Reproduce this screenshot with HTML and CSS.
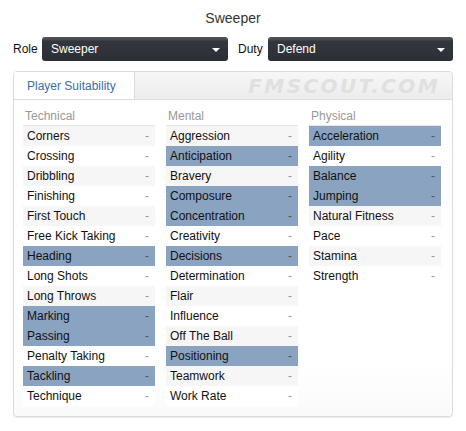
FILE: index.html
```html
<!DOCTYPE html>
<html>
<head>
<meta charset="utf-8">
<link rel="stylesheet" href="styles.css">
</head>
<body>
<div class="page">
  <div class="title">Sweeper</div>
  <div class="controls">
    <div class="field">
      <span class="label">Role</span>
      <div class="select role"><span>Sweeper</span><i class="arrow"></i></div>
    </div>
    <div class="field">
      <span class="label">Duty</span>
      <div class="select duty"><span>Defend</span><i class="arrow"></i></div>
    </div>
  </div>
  <div class="panel">
    <div class="tabs">
      <div class="tab">Player Suitability</div>
      <div class="watermark">FMSCOUT.COM</div>
    </div>
    <div class="cols">
      <div class="col">
        <div class="head">Technical</div>
        <div class="row"><span>Corners</span><b>-</b></div>
        <div class="row"><span>Crossing</span><b>-</b></div>
        <div class="row"><span>Dribbling</span><b>-</b></div>
        <div class="row"><span>Finishing</span><b>-</b></div>
        <div class="row"><span>First Touch</span><b>-</b></div>
        <div class="row"><span>Free Kick Taking</span><b>-</b></div>
        <div class="row key"><span>Heading</span><b>-</b></div>
        <div class="row"><span>Long Shots</span><b>-</b></div>
        <div class="row"><span>Long Throws</span><b>-</b></div>
        <div class="row key"><span>Marking</span><b>-</b></div>
        <div class="row key"><span>Passing</span><b>-</b></div>
        <div class="row"><span>Penalty Taking</span><b>-</b></div>
        <div class="row key"><span>Tackling</span><b>-</b></div>
        <div class="row"><span>Technique</span><b>-</b></div>
      </div>
      <div class="col">
        <div class="head">Mental</div>
        <div class="row"><span>Aggression</span><b>-</b></div>
        <div class="row key"><span>Anticipation</span><b>-</b></div>
        <div class="row"><span>Bravery</span><b>-</b></div>
        <div class="row key"><span>Composure</span><b>-</b></div>
        <div class="row key"><span>Concentration</span><b>-</b></div>
        <div class="row"><span>Creativity</span><b>-</b></div>
        <div class="row key"><span>Decisions</span><b>-</b></div>
        <div class="row"><span>Determination</span><b>-</b></div>
        <div class="row"><span>Flair</span><b>-</b></div>
        <div class="row"><span>Influence</span><b>-</b></div>
        <div class="row"><span>Off The Ball</span><b>-</b></div>
        <div class="row key"><span>Positioning</span><b>-</b></div>
        <div class="row"><span>Teamwork</span><b>-</b></div>
        <div class="row"><span>Work Rate</span><b>-</b></div>
      </div>
      <div class="col">
        <div class="head">Physical</div>
        <div class="row key"><span>Acceleration</span><b>-</b></div>
        <div class="row"><span>Agility</span><b>-</b></div>
        <div class="row key"><span>Balance</span><b>-</b></div>
        <div class="row key"><span>Jumping</span><b>-</b></div>
        <div class="row"><span>Natural Fitness</span><b>-</b></div>
        <div class="row"><span>Pace</span><b>-</b></div>
        <div class="row"><span>Stamina</span><b>-</b></div>
        <div class="row"><span>Strength</span><b>-</b></div>
      </div>
    </div>
  </div>
</div>
</body>
</html>
```
FILE: styles.css
```css
html, body {
  margin: 0;
  padding: 0;
  background: #fff;
}
body {
  font-family: "Liberation Sans", Arial, sans-serif;
  color: #111;
  width: 466px;
  height: 431px;
  overflow: hidden;
}
.page {
  padding: 10px 13px 0 13px;
}
.title {
  text-align: center;
  font-size: 14px;
  line-height: 16px;
  color: #333;
  height: 16px;
}
.controls {
  display: flex;
  margin-top: 11px;
  height: 24px;
  gap: 10px;
}
.field {
  display: flex;
  align-items: center;
  flex: 1;
}
.label {
  font-size: 12px;
  color: #111;
  width: 29px;
}
.field + .field .label {
  width: 30px;
}
.select {
  flex: 1;
  height: 24px;
  box-sizing: border-box;
  border-radius: 3px;
  background: linear-gradient(#52565c 0, #45494f 3px, #33373d 4px, #2c3036 100%);
  color: #fff;
  font-size: 12px;
  display: flex;
  align-items: center;
  padding: 0 8px 0 9px;
}
.select span {
  flex: 1;
}
.arrow {
  width: 0;
  height: 0;
  border-left: 4px solid transparent;
  border-right: 4px solid transparent;
  border-top: 4px solid #fff;
  margin-top: 1px;
}
.panel {
  margin-top: 10px;
  border: 1px solid #dcdcdc;
  border-radius: 4px;
  height: 346px;
  box-sizing: border-box;
  background: linear-gradient(#fff 0, #fff 85%, #fafafa 100%);
  box-shadow: 0 1px 1px rgba(0,0,0,0.08);
  overflow: hidden;
}
.tabs {
  display: flex;
  height: 28px;
  border-bottom: 1px solid #dcdcdc;
  background: linear-gradient(#f7f7f7, #ececec);
  box-sizing: border-box;
  align-items: center;
}
.tab {
  width: 121px;
  height: 100%;
  box-sizing: border-box;
  background: #fff;
  border-right: 1px solid #dcdcdc;
  color: #3b6ea8;
  font-size: 12px;
  line-height: 28px;
  padding-left: 13px;
}
.watermark {
  flex: 1;
  text-align: right;
  padding-right: 12px;
  font-weight: bold;
  font-style: italic;
  font-size: 20px;
  letter-spacing: 2.4px;
  color: #e0e0e0;
  font-family: "DejaVu Sans", sans-serif;
  line-height: 28px;
}
.cols {
  display: flex;
  gap: 11px;
  padding: 7px 11px 0 9px;
}
.col {
  width: 132px;
  font-size: 12px;
}
.head {
  color: #999;
  height: 18px;
  line-height: 18px;
  padding-left: 2px;
  border-bottom: 1px solid #e6e6e6;
}
.row {
  display: flex;
  height: 20px;
  line-height: 20px;
  padding: 0 6px 0 4px;
  background: #fff;
}
.row:nth-child(even) {
  background: #f6f6f6;
}
.row span {
  flex: 1;
}
.row b {
  font-weight: normal;
  color: #999;
}
.row.key,
.row.key:nth-child(even) {
  background: #8aa3c1;
}
.row.key b {
  color: #555;
}
```
